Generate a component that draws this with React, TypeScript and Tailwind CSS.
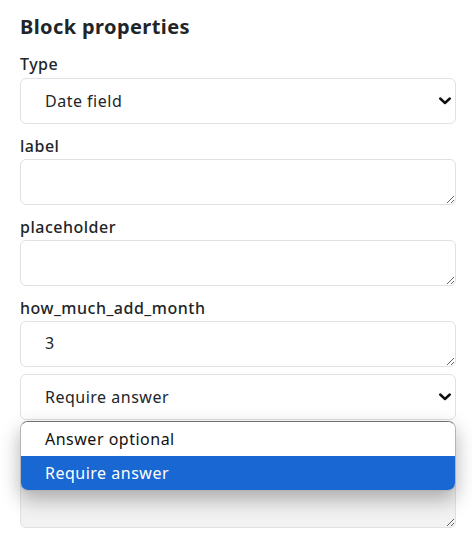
import React, { useState } from 'react';

const font = { fontFamily: '"Noto Sans", "Open Sans", sans-serif' };

const Chevron: React.FC = () => (
  <svg
    className="pointer-events-none absolute right-[4px] top-1/2 -translate-y-1/2"
    width="12"
    height="8"
    viewBox="0 0 12 8"
    fill="none"
  >
    <path d="M1.2 1.5 L6 6 L10.8 1.5" stroke="#111" strokeWidth="2.4" strokeLinecap="round" strokeLinejoin="round" />
  </svg>
);

const Field: React.FC<{ label: string; value?: string }> = ({ label, value = '' }) => (
  <div className="mb-[10px]">
    <label className="mb-[1px] block text-base leading-6 font-medium text-[#212529]">{label}</label>
    <textarea
      rows={1}
      defaultValue={value}
      className="block h-[46px] w-full rounded-md border border-[#dee2e6] bg-white pl-6 pr-3 pt-[9px] text-base leading-6 tracking-[0.5px] text-[#212529] outline-none"
      style={font}
    />
  </div>
);

export default function App() {
  const [type] = useState('Date field');
  const [required, setRequired] = useState('Require answer');
  const options = ['Answer optional', 'Require answer'];

  return (
    <div className="min-h-[537px] bg-white pl-5 pr-4 pt-[13px] tracking-[0.5px]" style={font}>
      <h2 className="mb-[11px] text-xl leading-7 font-bold tracking-[0.4px] text-[#212529]">Block properties</h2>

      {/* Type */}
      <div className="mb-[10px]">
        <label className="mb-[2px] block text-base leading-6 font-medium text-[#212529]">Type</label>
        <div className="relative flex h-[46px] items-center rounded-md border border-[#dee2e6] bg-white pl-6 text-base text-[#212529]">
          {type}
          <Chevron />
        </div>
      </div>

      <Field label="label" />
      <Field label="placeholder" />

      <div className="mb-[7px]">
        <label className="mb-[1px] block text-base leading-6 font-medium text-[#212529]">how_much_add_month</label>
        <textarea
          rows={1}
          defaultValue="3"
          className="block h-[46px] w-full rounded-md border border-[#dee2e6] bg-white pl-6 pr-3 pt-[9px] text-base leading-6 text-[#212529] outline-none"
          style={font}
        />
      </div>

      {/* Required select with open list */}
      <div className="relative">
        <div className="relative flex h-[46px] items-center rounded-md border border-[#dee2e6] bg-white pl-6 text-base text-[#212529]">
          {required}
          <Chevron />
        </div>

        <div className="absolute left-0 right-0 top-[47px] z-10 overflow-hidden rounded-lg border border-[#b5b5b5] border-t-[#6f6f6f] bg-white shadow-[0_8px_20px_rgba(0,0,0,0.3)]">
          {options.map(opt => (
            <div
              key={opt}
              onClick={() => setRequired(opt)}
              className={`flex h-[34px] items-center pl-6 text-base ${
                opt === required ? 'bg-[#1967d2] text-white' : 'bg-white text-[#111]'
              }`}
            >
              {opt}
            </div>
          ))}
        </div>

        <textarea
          rows={3}
          className="mt-[10px] block h-[98px] w-full rounded-md border border-[#dee2e6] bg-[#f2f2f2] outline-none"
          style={font}
        />
      </div>
    </div>
  );
}
